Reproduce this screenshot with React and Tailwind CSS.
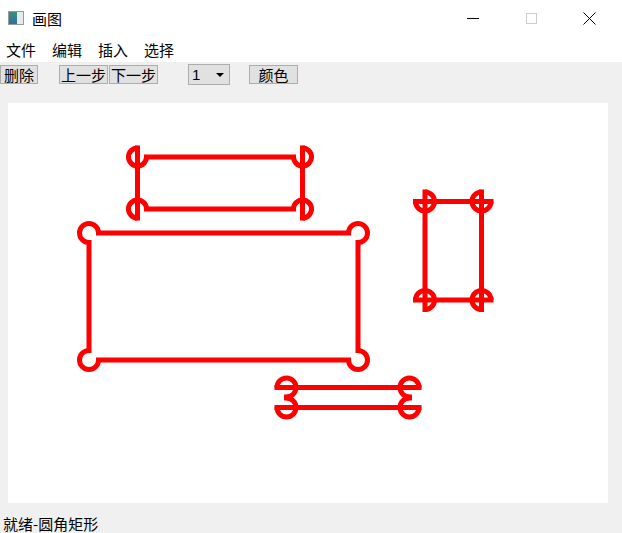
import React from "react";

// 画布上的圆角矩形（按参考图的拖拽方向分别给出缺口象限）
const shapes = [
  { l: 137.5, r: 302.5, t: 157, b: 209, rad: 9, qx: 1, qy: -1 },
  { l: 89, r: 358, t: 233, b: 360, rad: 9.5, qx: 1, qy: 1 },
  { l: 425, r: 481.5, t: 201.5, b: 300, rad: 9.5, qx: -1, qy: -1 },
  { l: 286.5, r: 409.5, t: 387.5, b: 407.5, rad: 9.5, qx: -1, qy: 1 },
];

function cornerArc(cx, cy, rad, qx, qy) {
  const sweep = qx * qy > 0 ? 0 : 1;
  const x1 = cx + qx * rad;
  const y2 = cy + qy * rad;
  return `M ${x1} ${cy} A ${rad} ${rad} 0 1 ${sweep} ${cx} ${y2}`;
}

function RoundShape({ l, r, t, b, rad, qx, qy }) {
  const corners = [
    [l, t, -1, -1],
    [r, t, 1, -1],
    [l, b, -1, 1],
    [r, b, 1, 1],
  ];
  return (
    <g stroke="#ff0000" strokeWidth="5" fill="none">
      {corners.map(([cx, cy, sx, sy], i) => (
        <path key={i} d={cornerArc(cx, cy, rad, qx * -sx, qy * -sy)} />
      ))}
      <g strokeLinecap="square">
        <line x1={l + qx * rad} y1={t} x2={r - qx * rad} y2={t} />
        <line x1={l + qx * rad} y1={b} x2={r - qx * rad} y2={b} />
        <line x1={l} y1={t + qy * rad} x2={l} y2={b - qy * rad} />
        <line x1={r} y1={t + qy * rad} x2={r} y2={b - qy * rad} />
      </g>
    </g>
  );
}

function ToolButton({ children, className }) {
  return (
    <button
      className={`h-[19px] border border-[#adadad] bg-[#e1e1e1] flex items-center justify-center text-[15px] leading-none text-black ${className}`}
    >
      {children}
    </button>
  );
}

export default function App() {
  return (
    <div
      className="w-[622px] h-[533px] bg-[#f0f0f0] flex flex-col overflow-hidden text-black"
      style={{ fontFamily: '"Noto Sans CJK SC", "Liberation Sans", sans-serif' }}
    >
      {/* 标题栏 */}
      <div className="h-[36px] bg-white flex items-center">
        <div className="ml-[8px] w-[16px] h-[14px] border border-[#9a9a9a] flex">
          <div className="w-[8px] h-full bg-gradient-to-b from-[#3f8f7a] to-[#2f6f9f]" />
          <div className="flex-1 bg-[#e4ecec]" />
        </div>
        <span className="ml-[8px] text-[15px] leading-none">画图</span>
        <div className="ml-auto flex items-center h-full">
          <div className="w-[58px] h-full flex items-center justify-center">
            <div className="w-[12px] h-px bg-black" />
          </div>
          <div className="w-[58px] h-full flex items-center justify-center">
            <div className="w-[11px] h-[11px] border border-[#cccccc]" />
          </div>
          <div className="w-[58px] h-full flex items-center justify-center">
            <svg width="13" height="13" viewBox="0 0 13 13">
              <path d="M0.5 0.5 L12.5 12.5 M12.5 0.5 L0.5 12.5" stroke="#000" strokeWidth="1" />
            </svg>
          </div>
          <div className="w-[4px]" />
        </div>
      </div>

      {/* 菜单栏 */}
      <div className="h-[26px] bg-white flex items-center text-[15px] leading-none pl-[6px] gap-[16px]">
        <span>文件</span>
        <span>编辑</span>
        <span>插入</span>
        <span>选择</span>
      </div>

      {/* 工具栏 */}
      <div className="h-[24px] flex items-center pt-[1px]">
        <ToolButton className="w-[38px]">删除</ToolButton>
        <ToolButton className="w-[49px] ml-[21px]">上一步</ToolButton>
        <ToolButton className="w-[49px] ml-[1px]">下一步</ToolButton>
        <div className="ml-[30px] w-[42px] h-[21px] border border-[#adadad] bg-[#e1e1e1] flex items-center px-[3px] text-[15px] leading-none">
          <span style={{ fontFamily: '"Liberation Sans", sans-serif' }}>1</span>
          <svg className="ml-auto mr-[2px]" width="8" height="4" viewBox="0 0 8 4">
            <path d="M0 0 L8 0 L4 4 Z" fill="#000" />
          </svg>
        </div>
        <ToolButton className="w-[49px] ml-[19px]">颜色</ToolButton>
      </div>

      {/* 画布 */}
      <div className="pl-[8px] pt-[17px]">
        <svg width="600" height="400" viewBox="8 103 600 400" className="block bg-white">
          {shapes.map((s, i) => (
            <RoundShape key={i} {...s} />
          ))}
        </svg>
      </div>

      {/* 状态栏 */}
      <div className="h-[30px] shrink-0 pl-[3px] pt-[12px] text-[15px] leading-[17px]">
        就绪-圆角矩形
      </div>
    </div>
  );
}
